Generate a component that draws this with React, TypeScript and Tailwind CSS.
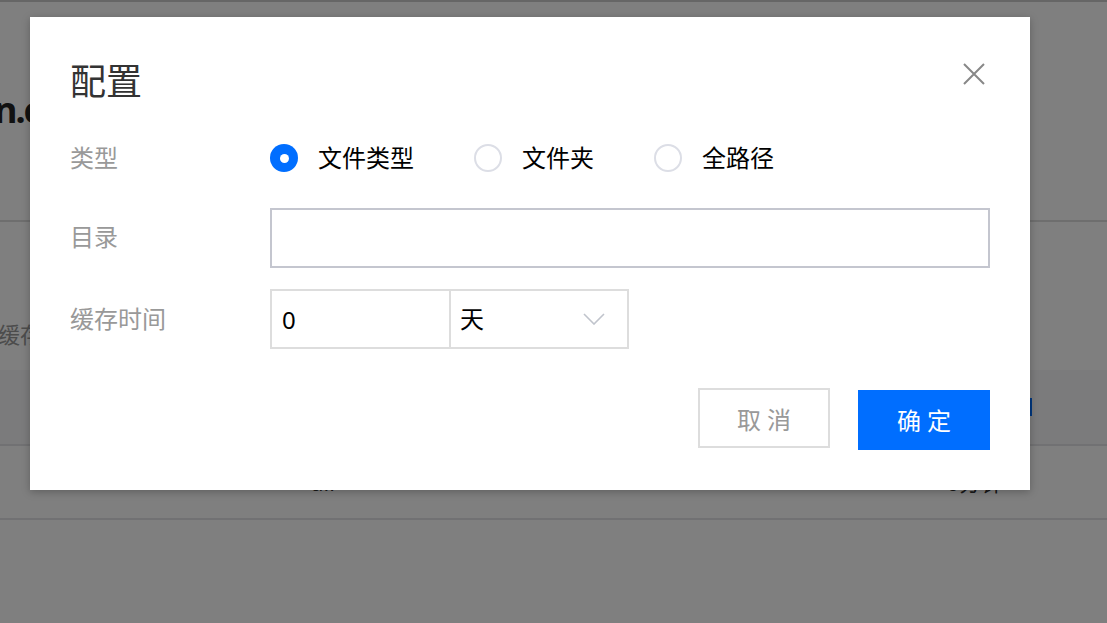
import { useState } from 'react'

const font = 'font-["Noto_Sans","Noto_Sans_CJK_SC",sans-serif]'

function Radio({ label, checked, onClick }: { label: string; checked: boolean; onClick: () => void }) {
  return (
    <button onClick={onClick} className="flex items-center gap-5">
      {checked ? (
        <span className="w-[28px] h-[28px] rounded-full bg-[#006eff] flex items-center justify-center">
          <span className="w-[9px] h-[9px] rounded-full bg-white"></span>
        </span>
      ) : (
        <span className="w-[28px] h-[28px] rounded-full border-2 border-[#dcdee6] bg-white"></span>
      )}
      <span className="text-[24px] text-[#000]">{label}</span>
    </button>
  )
}

export default function App() {
  const [type, setType] = useState('file')

  return (
    <div className={`relative w-[1107px] h-[623px] overflow-hidden bg-white ${font}`}>
      {/* page behind the dialog */}
      <div className="border-t-2 border-[#ccc]">
        <div className="h-[218px] pt-[84px]">
          <div className="text-[36px] font-bold text-[#222] leading-[48px] -ml-[6px] tracking-[-2px]">n.com</div>
        </div>
        <div className="border-t-2 border-[#ddd] h-[150px] pt-[96px]">
          <span className="text-[22px] text-[#999] -ml-[2px]">缓存时间</span>
        </div>
        <div className="h-[76px] bg-[#f6f6f8] border-b-2 border-[#e2e2e6] flex items-center justify-end pr-[75px]">
          <span className="w-[3px] h-[18px] bg-[#006eff]"></span>
        </div>
        <div className="h-[74px] border-b-2 border-[#e2e2e6] flex items-center text-[22px] text-[#333]">
          <span className="ml-[310px]">dir</span>
          <span className="ml-auto mr-[104px]">0分钟</span>
        </div>
      </div>

      {/* overlay */}
      <div className="absolute inset-0 bg-black/50"></div>

      {/* dialog */}
      <div className="absolute left-[30px] top-[17px] w-[1000px] h-[473px] bg-white shadow-[0_2px_8px_rgba(0,0,0,0.25)] px-10 pt-[41px]">
        <div className="flex items-start justify-between">
          <h2 className="text-[36px] leading-[48px] text-[#333]">配置</h2>
          <button className="mt-[4px] mr-[4px] w-[24px] h-[24px] text-[#888]">
            <svg width="24" height="24" viewBox="0 0 24 24" fill="none" stroke="currentColor" strokeWidth="2">
              <path d="M2 2L22 22M22 2L2 22" />
            </svg>
          </button>
        </div>

        <div className="mt-[22px] flex flex-col gap-[20px]">
          <div className="flex items-center h-[60px]">
            <span className="w-[200px] text-[24px] text-[#999]">类型</span>
            <div className="flex items-center gap-[60px]">
              <Radio label="文件类型" checked={type === 'file'} onClick={() => setType('file')} />
              <Radio label="文件夹" checked={type === 'dir'} onClick={() => setType('dir')} />
              <Radio label="全路径" checked={type === 'path'} onClick={() => setType('path')} />
            </div>
          </div>

          <div className="flex items-center h-[60px]">
            <span className="w-[200px] text-[24px] text-[#999] -mt-[3px]">目录</span>
            <input className="w-[720px] h-[60px] border-2 border-[#c4c6cf] outline-none px-3 text-[24px]" />
          </div>

          <div className="flex items-center h-[60px] mt-[1px]">
            <span className="w-[200px] text-[24px] text-[#999]">缓存时间</span>
            <div className="flex h-[60px] border-2 border-[#dddddd]">
              <input
                defaultValue="0"
                className="w-[179px] h-full border-r-2 border-[#dddddd] outline-none pl-[10px] text-[24px] text-[#000]"
              />
              <div className="w-[176px] h-full flex items-center justify-between pl-[9px] pr-[22px]">
                <span className="text-[24px] text-[#000]">天</span>
                <svg width="22" height="12" viewBox="0 0 22 12" fill="none" stroke="#c0c4cc" strokeWidth="1.6">
                  <path d="M1 1L11 11L21 1" />
                </svg>
              </div>
            </div>
          </div>
        </div>

        <div className="mt-[39px] flex justify-end gap-[28px]">
          <button className="w-[132px] h-[60px] border-2 border-[#dddddd] text-[24px] text-[#999] tracking-[6px] pl-[6px] pt-[3px]">
            取消
          </button>
          <button className="mt-[2px] w-[132px] h-[60px] bg-[#006eff] text-[24px] text-white tracking-[6px] pl-[6px] pt-[1px]">
            确定
          </button>
        </div>
      </div>
    </div>
  )
}
